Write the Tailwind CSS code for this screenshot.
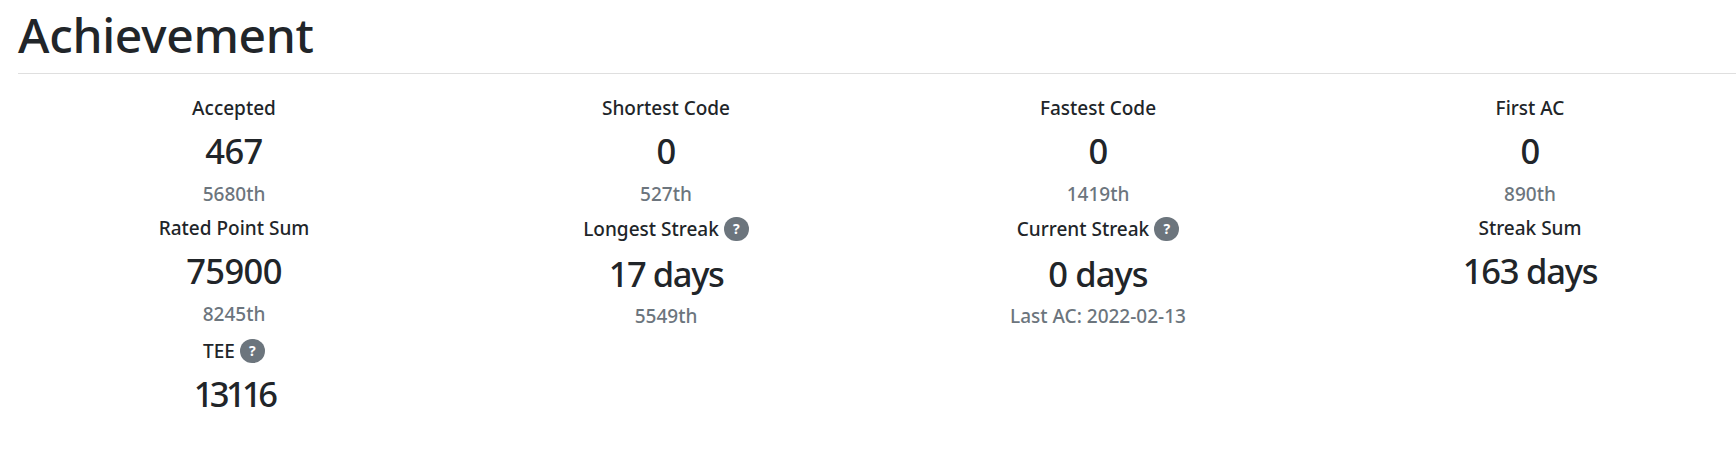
<!DOCTYPE html>
<html lang="en">
<head>
  <meta charset="UTF-8" />
  <title>Achievement</title>
  <script src="https://cdn.jsdelivr.net/npm/@tailwindcss/browser@4"></script>
</head>
<body class="bg-white overflow-hidden h-[468px] font-['Noto_Sans',sans-serif] text-[#212529]">
  <div class="pl-[18px]">
    <h1 class="text-[48px] leading-[58px] font-medium pt-[6px] pb-[9px] border-b border-[#dfdfdf] tracking-[-0.3px]">Achievement</h1>

    <div class="w-[1728px] pt-[22px] text-center">
      <div class="grid grid-cols-4 h-[120px]">
        <div>
          <div class="text-[19px] leading-[24px] font-medium">Accepted</div>
          <div class="text-[34.5px] leading-[46px] font-medium tracking-[-0.6px] mt-[8px]">467</div>
          <div class="text-[19px] leading-[24px] font-medium text-[#6c757d] mt-[8px]">5680th</div>
        </div>
        <div>
          <div class="text-[19px] leading-[24px] font-medium">Shortest Code</div>
          <div class="text-[34.5px] leading-[46px] font-medium tracking-[-0.6px] mt-[8px]">0</div>
          <div class="text-[19px] leading-[24px] font-medium text-[#6c757d] mt-[8px]">527th</div>
        </div>
        <div>
          <div class="text-[19px] leading-[24px] font-medium">Fastest Code</div>
          <div class="text-[34.5px] leading-[46px] font-medium tracking-[-0.6px] mt-[8px]">0</div>
          <div class="text-[19px] leading-[24px] font-medium text-[#6c757d] mt-[8px]">1419th</div>
        </div>
        <div>
          <div class="text-[19px] leading-[24px] font-medium">First AC</div>
          <div class="text-[34.5px] leading-[46px] font-medium tracking-[-0.6px] mt-[8px]">0</div>
          <div class="text-[19px] leading-[24px] font-medium text-[#6c757d] mt-[8px]">890th</div>
        </div>
      </div>

      <div class="grid grid-cols-4 h-[122px]">
        <div>
          <div class="text-[19px] leading-[24px] font-medium">Rated Point Sum</div>
          <div class="text-[34.5px] leading-[46px] font-medium tracking-[-0.6px] mt-[8px]">75900</div>
          <div class="text-[19px] leading-[24px] font-medium text-[#6c757d] mt-[8px]">8245th</div>
        </div>
        <div>
          <div class="text-[19px] leading-[26px] font-medium flex justify-center items-center gap-[5px]">Longest Streak
            <span class="w-[25px] h-[24px] rounded-full bg-[#6c757d] text-white text-[14px] leading-[24px] font-bold">?</span>
          </div>
          <div class="text-[34.5px] leading-[46px] font-medium tracking-[-1.4px] mt-[9px]">17 days</div>
          <div class="text-[19px] leading-[24px] font-medium text-[#6c757d] mt-[7px]">5549th</div>
        </div>
        <div>
          <div class="text-[19px] leading-[26px] font-medium flex justify-center items-center gap-[5px]">Current Streak
            <span class="w-[25px] h-[24px] rounded-full bg-[#6c757d] text-white text-[14px] leading-[24px] font-bold">?</span>
          </div>
          <div class="text-[34.5px] leading-[46px] font-medium tracking-[-0.9px] mt-[9px]">0 days</div>
          <div class="text-[19px] leading-[24px] font-medium text-[#6c757d] mt-[7px]">Last AC: 2022-02-13</div>
        </div>
        <div>
          <div class="text-[19px] leading-[24px] font-medium">Streak Sum</div>
          <div class="text-[34.5px] leading-[46px] font-medium tracking-[-1.2px] mt-[8px]">163 days</div>
        </div>
      </div>

      <div class="grid grid-cols-4">
        <div>
          <div class="text-[19px] leading-[26px] font-medium flex justify-center items-center gap-[5px]">TEE
            <span class="w-[25px] h-[24px] rounded-full bg-[#6c757d] text-white text-[14px] leading-[24px] font-bold">?</span>
          </div>
          <div class="text-[34.5px] leading-[46px] font-medium tracking-[-3.6px] mt-[7px]">13116</div>
        </div>
      </div>
    </div>
  </div>
</body>
</html>
